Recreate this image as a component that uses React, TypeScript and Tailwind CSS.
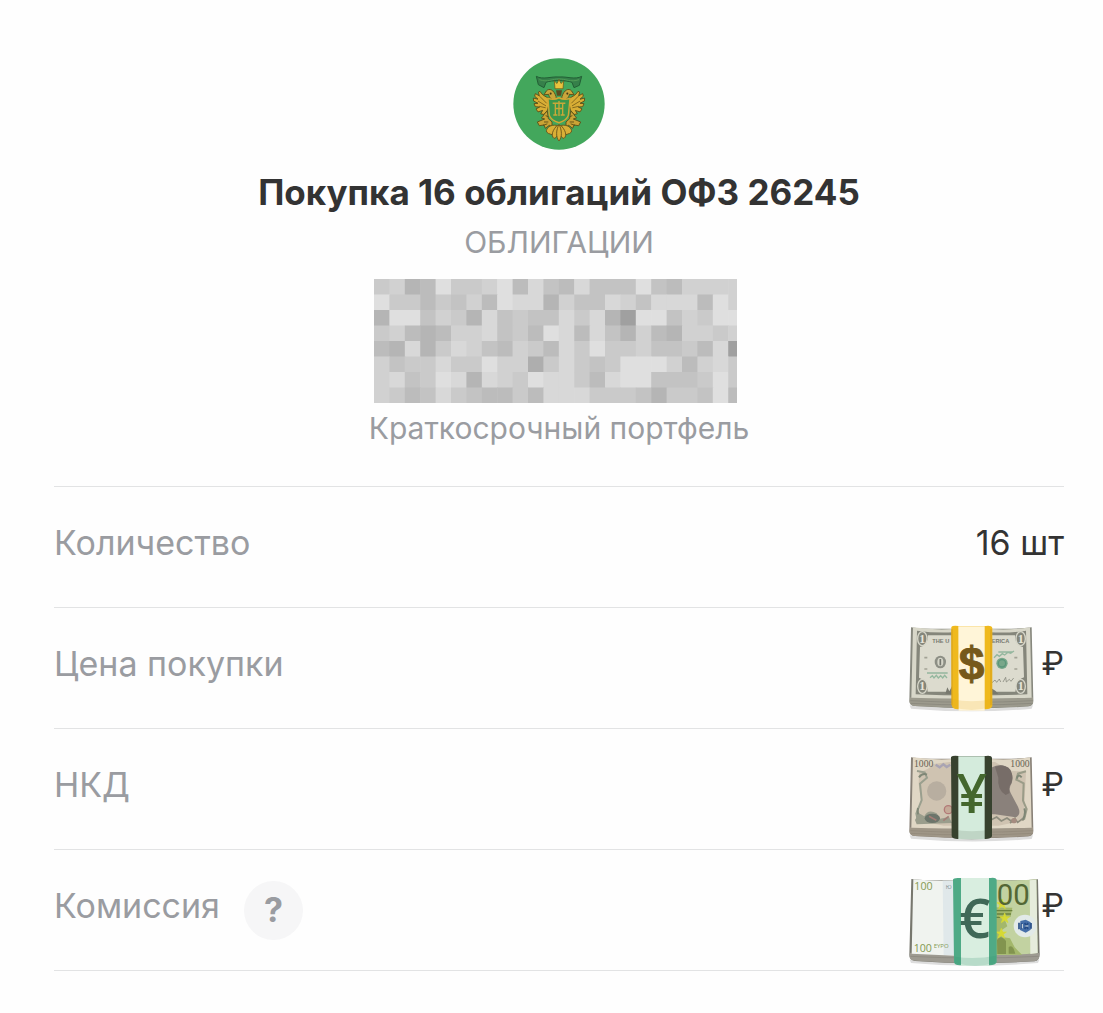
import type { ReactNode } from 'react';

/* ------------------------------------------------------------------ */
/*  Data                                                               */
/* ------------------------------------------------------------------ */

// One digit per tile, 0 is the darkest
const mosaicRows = [
  '673496679485485559547777',
  '966465749883755875888497',
  '399576385655868309957699',
  '674347785649848537437767',
  '438368754764869667556480',
  '756686697726865699974786',
  '785698387698864899555696',
  '764586544648886665366594',
];

/* ------------------------------------------------------------------ */
/*  Drawings                                                           */
/* ------------------------------------------------------------------ */

function WingHalf() {
  return (
    <g stroke="#5b4c16" strokeWidth="2.5" strokeLinejoin="round">
      {/* head */}
      <path d="M170 148 C164 130 150 124 141 133 L134 143 L148 142 C149 151 158 158 172 160 Z" fill="#c9a63b" />
      {/* wing feathers */}
      <path
        d="M152 154 C138 148 128 144 122 134 L117 136 L120 146 L108 140 L106 147 L116 155 L102 152 L103 160 L116 166 L104 167 L108 175 L121 176 L110 181 L116 189 L130 185 L124 194 L134 196 L145 184 Z"
        fill="#d8ae35"
      />
      <path d="M121 147 L142 166 M116 160 L140 173 M119 174 L139 178" fill="none" stroke="#7b6219" />
      {/* leg and scroll */}
      <path d="M144 187 C132 194 134 200 126 205 L136 208 L114 216 L120 226 L134 224 L138 233 L150 225 L158 229 L158 216 L147 207 Z" fill="#caa335" />
      <path d="M134 216 L147 216 M139 199 L147 202 M131 225 L144 221" fill="none" />
    </g>
  );
}

function Emblem() {
  return (
    <svg viewBox="41 39 276 276" className="size-[92px]" aria-hidden="true">
      <circle cx="179" cy="177" r="137" fill="#43a75c" />
      {/* ribbon */}
      <path
        d="M111 94 C130 105 155 94 179 96 C203 94 228 105 247 94 L240 121 L224 128 L218 112 C200 105 156 105 140 112 L134 128 L117 119 Z"
        fill="#36804a"
        stroke="#225f35"
        strokeWidth="3"
      />
      <path d="M120 104 C145 113 160 101 179 102 C198 101 214 113 239 104" fill="none" stroke="#519d57" strokeWidth="3" />
      <g transform="matrix(1 0 0 1.12 0 -11)">
        <WingHalf />
        <g transform="matrix(-1 0 0 1 358 0)">
          <WingHalf />
        </g>
        {/* crown */}
        <path d="M165 106 L173 113 L179 102 L185 113 L193 106 L191 127 L167 127 Z" fill="#e8c33e" stroke="#6a5516" strokeWidth="2" />
        <path d="M170 131 H188 L185 146 H173 Z" fill="#594c21" />
        <circle cx="154" cy="140" r="3" fill="#43391a" />
        <circle cx="204" cy="140" r="3" fill="#43391a" />
        {/* shield */}
        <path d="M146 153 Q164 158 179 151 Q194 158 212 153 L207 198 Q202 212 179 218 Q155 212 150 198 Z" fill="#3a974c" stroke="#d1a735" strokeWidth="4" />
        <path d="M160 166 H198 M168 166 V196 M179 160 V200 M190 166 V196 M162 197 H174 M184 197 H196 M168 180 H190" fill="none" stroke="#c9a838" strokeWidth="4" />
        {/* tail */}
        <g fill="#d9af36" stroke="#67531a" strokeWidth="2.5">
          <path d="M172 225 C155 222 138 232 142 243 C148 250 158 247 164 254 Z" />
          <path d="M186 225 C203 222 220 232 216 243 C210 250 200 247 194 254 Z" />
          <path d="M174 225 C161 236 153 252 164 260 C174 259 178 245 178 228 Z" />
          <path d="M184 225 C197 236 205 252 194 260 C184 259 180 245 180 228 Z" />
          <path d="M179 222 C170 238 169 256 179 267 C189 256 188 238 179 222 Z" />
        </g>
      </g>
    </svg>
  );
}

function Mosaic() {
  return (
    <svg viewBox="0 0 363 124" className="mt-[17px] mr-2 w-[363px]" role="img" aria-label="Скрыто">
      {mosaicRows.map((row, y) =>
        [...row].map((digit, x) => {
          const level = 160 + Number(digit) * 7;
          return (
            <rect key={`${x}-${y}`} x={x * 15.4} y={y * 15.5} width="16" height="16" fill={`rgb(${level} ${level} ${level})`} />
          );
        }),
      )}
    </svg>
  );
}

function DollarBills() {
  return (
    <svg viewBox="30 -6 408 360" className="h-[120px] w-[136px] shrink-0" role="img" aria-label="Доллары">
      <path d="M44 286 Q230 306 414 286 L410 296 Q230 312 48 296 Z" fill="#ddd" />
      <path d="M48 52 L43 274 Q44 288 60 288 Q230 301 402 289 Q416 287 415 270 L410 52 Q370 58 285 56 L170 56 Q90 58 48 52 Z" fill="#87887e" />
      <path d="M45 262 Q230 272 414 262 L414 278 Q410 289 390 289 Q230 298 60 288 Q45 286 44 276 Z" fill="#9c9a8d" />
      <path d="M46 272 Q230 282 414 272 M48 280 Q230 290 412 280" fill="none" stroke="#858478" strokeWidth="2" />
      <path d="M54 52 Q120 61 175 57 H285 Q350 61 405 52 L410 263 Q230 269 49 263 Z" fill="#d8d7c9" />
      <path d="M66 62 Q120 70 175 67 H285 Q345 70 393 62 L397 253 Q230 260 62 253 Z" fill="#85867b" />
      <path d="M99 76 H360 Q360 106 384 111 L387 202 Q365 208 361 245 H98 Q96 210 72 203 L75 111 Q99 106 99 76 Z" fill="#dcdbce" />
      <g fill="#85867b" stroke="#d7d7ca" strokeWidth="4">
        <ellipse cx="82" cy="86" rx="14" ry="21" />
        <ellipse cx="377" cy="86" rx="14" ry="21" />
        <ellipse cx="82" cy="229" rx="14" ry="21" />
        <ellipse cx="377" cy="229" rx="14" ry="21" />
      </g>
      <g fill="#e7e6da" className="font-['Liberation_Serif'] font-bold" fontSize="36" textAnchor="middle">
        <text x="82" y="98">1</text>
        <text x="377" y="98">1</text>
        <text x="82" y="241">1</text>
        <text x="377" y="241">1</text>
      </g>
      <g fill="#77786e" className="font-['Liberation_Sans'] font-bold" fontSize="17">
        <text x="112" y="99">THE U</text>
        <text x="290" y="99">ERICA</text>
      </g>
      <ellipse cx="136" cy="156" rx="17" ry="19" fill="#8d8f85" />
      <ellipse cx="136" cy="156" rx="9" ry="13" fill="#d5d5c8" />
      <path d="M136 147 V166" stroke="#75776f" strokeWidth="5" />
      <circle cx="321" cy="160" r="17" fill="#79a78a" />
      <circle cx="321" cy="160" r="11" fill="none" stroke="#5b967a" strokeWidth="4" />
      <path d="M96 189 H158 M105 203 l7 -6 5 7 7 -8 6 8 7 -7 6 7 6 -8 7 8 M297 143 l9 -9 7 5 9 -8 7 4 10 -8 8 3 10 -7 M310 126 H354" fill="none" stroke="#94b79e" strokeWidth="4" />
      <path d="M291 218 l9 -8 5 7 8 -10 4 9 M324 216 l8 -14 2 14 9 -8 5 6 8 -10" fill="none" stroke="#77796e" strokeWidth="2" />
      <path d="M88 143 h9 M88 177 h9 M358 143 h9 M358 177 h9" stroke="#a2a295" strokeWidth="5" />
      <path d="M151 251 L157 232 L163 244 L171 229 V252 Z M289 252 V235 L301 242 L310 252 Z" fill="#77786e" />
      <path d="M169 51 Q172 46 190 48 H273 Q290 46 292 54 V288 Q288 298 272 298 H188 Q174 298 171 289 Z" fill="#efb91e" />
      <path d="M171 58 V286 M288 58 V286" stroke="#dba51b" strokeWidth="4" />
      <path d="M190 49 H269 V302 H191 Z" fill="#fff5d8" />
      <path d="M172 268 Q230 280 289 268 L286 292 Q230 308 173 292 Z" fill="#dba51b" opacity=".18" />
      <text x="230" y="211" textAnchor="middle" fill="#76591b" stroke="#76591b" strokeWidth="3" fontSize="138" className="font-['Liberation_Sans'] font-bold">$</text>
    </svg>
  );
}

function YenBills() {
  return (
    <svg viewBox="30 -33 408 360" className="h-[120px] w-[136px] shrink-0" role="img" aria-label="Иены">
      <path d="M44 286 Q230 306 414 286 L410 297 Q230 312 48 296 Z" fill="#ddd" />
      <path d="M48 52 L43 274 Q44 288 60 288 Q230 301 402 289 Q416 287 415 270 L410 52 Q370 58 285 56 L170 56 Q90 58 48 52 Z" fill="#888177" />
      <path d="M45 262 Q230 272 414 262 L414 278 Q410 289 390 289 Q230 298 60 288 Q45 286 44 276 Z" fill="#9f9687" />
      <path d="M46 272 Q230 282 414 272 M48 280 Q230 290 412 280" fill="none" stroke="#8f8677" strokeWidth="2" />
      <path d="M54 52 Q120 61 175 57 H285 Q350 61 405 52 L410 263 Q230 269 49 263 Z" fill="#e0d7c5" />
      <path d="M72 94 Q99 93 115 72 L164 66 H300 L347 92 L393 95 L386 242 L310 257 H147 L61 240 Q76 216 78 181 L71 132 Z" fill="#cfc3b1" />
      <path d="M66 93 L89 97 L96 113 L75 131 L80 180 L64 221 L69 244" fill="none" stroke="#9a9f8e" strokeWidth="6" />
      <path d="M393 94 L369 101 L364 119 L386 130 L384 182 L395 207 L387 239" fill="none" stroke="#9a9c88" strokeWidth="6" />
      <path d="M72 112 q10 -14 24 -8 M69 204 q-4 22 12 34 M380 112 q-12 -12 -14 4 M388 205 q6 18 -6 36" fill="none" stroke="#7f8776" strokeWidth="6" />
      <circle cx="125" cy="153" r="29" fill="#b8aea0" />
      <path d="M122 74 l12 8 11 -9 10 8 11 -7" fill="none" stroke="#a9a4b3" strokeWidth="7" />
      <circle cx="160" cy="209" r="12" fill="#c5aa98" stroke="#b27977" strokeWidth="4" />
      <path d="M60 240 L72 220 L88 229 Q98 206 125 220 L135 236 L162 231 L171 249 L65 253 Z" fill="#9a9d8c" />
      <ellipse cx="112" cy="235" rx="23" ry="14" fill="#6c756b" />
      <path d="M102 229 L124 241 M145 242 l16 -13" stroke="#a37d76" strokeWidth="5" />
      <path d="M288 83 Q324 64 343 89 Q357 105 350 130 Q340 145 347 159 L369 200 Q380 224 362 232 L300 223 H288 Z" fill="#8a817b" />
      <path d="M300 80 Q343 70 350 99 Q355 112 349 129 Q338 143 344 159 L332 165 Q306 149 310 113 Z" fill="#776d68" />
      <path d="M289 239 l16 -8 14 12 17 -9 12 9 14 -10 M345 249 l15 -12 8 10 15 -11" fill="none" stroke="#8d8c7d" strokeWidth="5" />
      <circle cx="357" cy="242" r="8" fill="#a58c80" />
      <g fill="#666354" className="font-['Liberation_Serif']" fontSize="29">
        <text x="57" y="82">1000</text>
        <text x="346" y="82">1000</text>
      </g>
      <path d="M168 51 Q173 46 190 48 H273 Q290 46 291 54 V289 Q287 297 272 297 H187 Q173 297 170 289 Z" fill="#38422f" />
      <path d="M190 49 H269 V298 H190 Z" fill="#d4ebdc" />
      <path d="M171 268 Q230 280 290 268 L286 292 Q230 308 173 292 Z" fill="#38422f" opacity=".13" />
      <text x="230" y="218" textAnchor="middle" fill="#44672e" fontSize="162" className="font-['Open_Sans'] font-semibold">¥</text>
    </svg>
  );
}

function EuroBills() {
  return (
    <svg viewBox="30 -45 408 360" className="h-[120px] w-[136px] shrink-0" role="img" aria-label="Евро">
      <path d="M44 284 Q230 304 433 284 L429 294 Q230 311 48 294 Z" fill="#ddd" />
      <path d="M49 42 L43 270 Q43 286 60 288 Q230 301 418 289 Q434 286 434 269 L429 43 Q380 48 300 44 L170 45 Q90 47 49 42 Z" fill="#77776e" />
      <path d="M45 263 Q230 274 433 264 L432 278 Q430 289 408 289 Q230 299 60 287 Q45 286 44 276 Z" fill="#9d9a91" />
      <path d="M46 274 Q230 284 432 274" fill="none" stroke="#88857c" strokeWidth="2" />
      <path d="M55 43 Q120 49 180 46 V272 L50 266 Z" fill="#f0f3ef" />
      <path d="M143 47 H180 V270 H146 Z" fill="#e0e8ea" />
      <path d="M300 45 Q370 48 424 43 L428 264 Q370 270 300 270 Z" fill="#c2d2a1" />
      <path d="M404 46 L424 44 L428 264 L406 267 Z" fill="#e6ecdc" />
      <path d="M302 127 L352 128 L347 155 L329 162 L337 184 L315 199 L321 216 L345 220 L359 247 L381 269 L302 269 Z" fill="#a3b76b" />
      <path d="M306 225 Q316 207 333 228 V267 H307 Z M341 266 V246 Q354 236 361 266 Z" fill="#82944f" />
      <path d="M303 137 H352 M305 147 H348 M303 157 H335" stroke="#6c823f" strokeWidth="4" />
      <g fill="#d6d934" stroke="#d6d934" strokeWidth="2">
        <path d="M321 102 l4 11 11 0 -9 7 4 11 -10 -7 -10 7 4 -11 -9 -7 11 0 Z" />
        <path d="M329 144 l4 11 11 0 -9 7 4 11 -10 -7 -10 7 4 -11 -9 -7 11 0 Z" />
        <path d="M319 190 l4 11 11 0 -9 7 4 11 -10 -7 -10 7 4 -11 -9 -7 11 0 Z" />
      </g>
      <circle cx="390" cy="183" r="34" fill="#e2eae8" />
      <path d="M376 168 L392 164 L407 172 V194 L392 203 L375 195 Z" fill="#466fa8" />
      <path d="M372 173 V193 M380 175 V191 M389 174 L399 192 M399 174 L389 192 M408 174 V191" stroke="#244b86" strokeWidth="5" />
      <path d="M382 177 V190 M391 183 H400" stroke="#e2eae8" strokeWidth="3" />
      <g fill="#849a52" className="font-['Open_Sans']">
        <text x="58" y="76" fontSize="32">100</text>
        <text x="56" y="262" fontSize="32">100</text>
        <text x="116" y="250" fontSize="18">EYPO</text>
        <text x="152" y="72" fontSize="17" fill="#7f8e91">Ю</text>
      </g>
      <text x="305" y="121" fill="#536735" fontSize="88" className="font-[Roboto]">00</text>
      <path d="M174 44 Q175 38 192 39 H287 Q303 37 305 44 V291 Q301 301 284 301 H194 Q179 301 177 291 Z" fill="#4faa86" />
      <path d="M198 39 H282 V302 H198 Z" fill="#d9eee0" />
      <path d="M179 275 Q240 284 304 272 L301 295 Q240 309 180 295 Z" fill="#348f6c" opacity=".2" />
      <text x="239" y="218" textAnchor="middle" fill="#406858" fontSize="163" className="font-['Open_Sans'] font-semibold">€</text>
    </svg>
  );
}

/* ------------------------------------------------------------------ */
/*  Rows                                                               */
/* ------------------------------------------------------------------ */

interface DetailRowProps {
  label: string;
  hint?: ReactNode;
  children: ReactNode;
}

function DetailRow({ label, hint, children }: DetailRowProps) {
  return (
    <div className="flex h-[121px] items-center justify-between border-b border-[#e2e3e4] text-[34px] leading-10">
      <dt className="flex items-center gap-6 text-[#9a9ca1]">
        <span className="pb-2">{label}</span>
        {hint}
      </dt>
      <dd className="flex items-center text-[#333]">{children}</dd>
    </div>
  );
}

function Ruble() {
  return <span className="pb-2 pl-px text-[32px]">₽</span>;
}

export default function App() {
  return (
    <main className="min-h-screen bg-[#fefefe] pt-[58px] pr-[39px] pb-10 pl-[54px] font-[Inter,sans-serif]">
      <header className="flex flex-col items-center pb-[38px] text-center text-[#9a9ca1]">
        <Emblem />
        <h1 className="mt-5 text-[35px] leading-[44px] font-bold text-[#333]">Покупка 16 облигаций ОФЗ 26245</h1>
        <p className="mt-2 text-[30px] leading-10">ОБЛИГАЦИИ</p>
        <Mosaic />
        <p className="mt-[5px] text-[30px] leading-10">Краткосрочный портфель</p>
      </header>

      <dl className="border-t border-[#e2e3e4]">
        <DetailRow label="Количество">
          <span className="pb-2">16 шт</span>
        </DetailRow>
        <DetailRow label="Цена покупки">
          <DollarBills />
          <Ruble />
        </DetailRow>
        <DetailRow label="НКД">
          <YenBills />
          <Ruble />
        </DetailRow>
        <DetailRow
          label="Комиссия"
          hint={
            <button type="button" className="size-[59px] rounded-full bg-[#f6f6f7] text-[34px] font-bold">
              ?
            </button>
          }
        >
          <EuroBills />
          <Ruble />
        </DetailRow>
      </dl>
    </main>
  );
}
